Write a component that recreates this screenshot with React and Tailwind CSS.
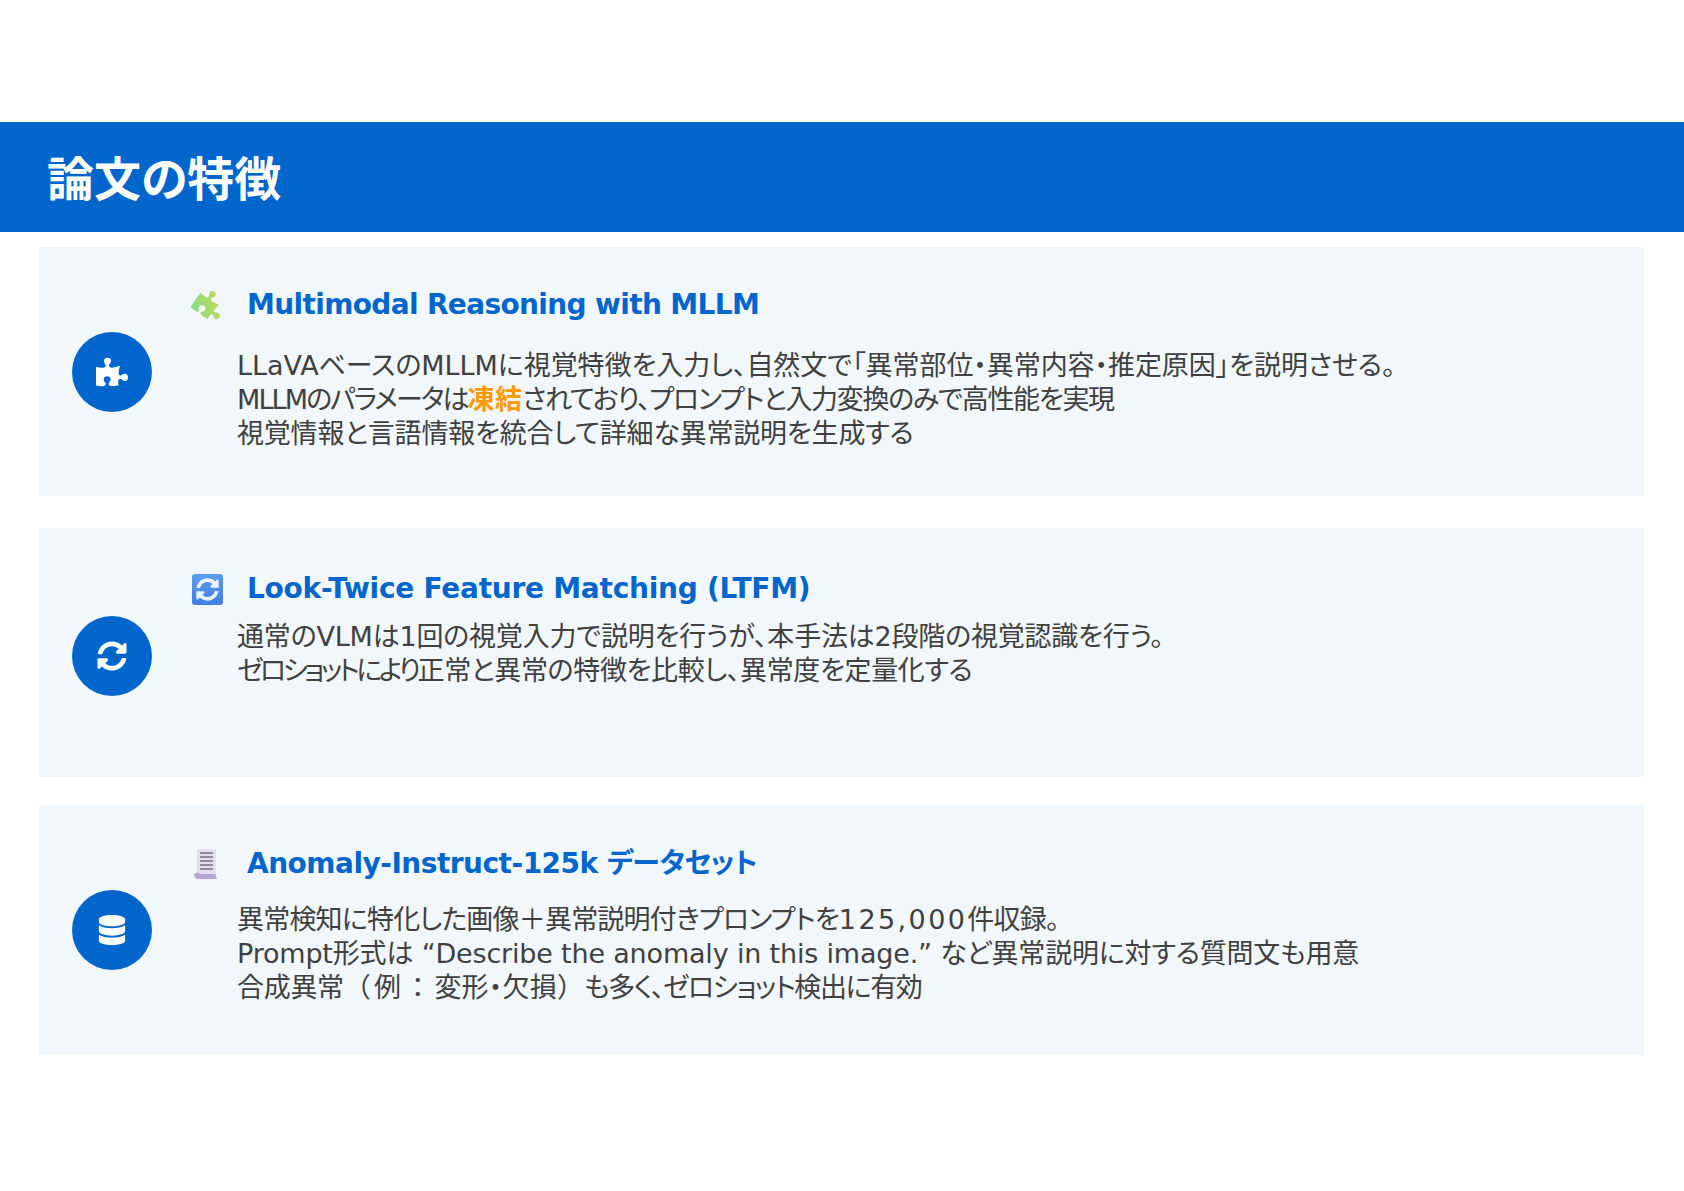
import React from "react";
import { FaPuzzlePiece, FaSyncAlt, FaDatabase } from "react-icons/fa";

const latin = "font-['DejaVu_Sans','Noto_Sans_CJK_JP',sans-serif] [font-feature-settings:'palt']";

function PuzzleEmoji() {
  return (
    <div className="w-[34px] h-[34px] flex items-center justify-center pl-[5px]">
      <svg width="0" height="0" className="absolute">
        <defs>
          <linearGradient id="pz" x1="0" y1="1" x2="1" y2="0">
            <stop offset="0" stopColor="#7fe08a" />
            <stop offset="1" stopColor="#d8d84a" />
          </linearGradient>
        </defs>
      </svg>
      <FaPuzzlePiece size={30} className="shrink-0 rotate-[35deg]" style={{ fill: "url(#pz)" }} />
    </div>
  );
}

function SyncEmoji() {
  return (
    <div className="w-[31px] h-[31px] rounded-[3px] bg-gradient-to-b from-[#5c9cf0] to-[#3f7fe0] flex items-center justify-center">
      <FaSyncAlt size={23} color="#eef4fd" />
    </div>
  );
}

function ScrollEmoji() {
  return (
    <svg width="34" height="32" viewBox="0 0 34 32">
      <path d="M7 1h19v27H7z" fill="#e4def0" />
      <path d="M4 26c3-2 5-1 6 0h15l2 5H8c-2 0-4-2-4-5z" fill="#b5a6d6" />
      <path d="M10 5h13M10 9h13M10 13h13M10 17h13M10 21h13" stroke="#8d8a99" strokeWidth="2" />
    </svg>
  );
}

const cards = [
  {
    cls: "h-[249px] mt-[15px]",
    circleCls: "",
    titleCls: "pt-[41px]",
    bodyCls: "mt-[27px]",
    Icon: FaPuzzlePiece,
    iconSize: 32,
    Emoji: PuzzleEmoji,
    titleTrack: "tracking-[-0.65px]",
    title: "Multimodal Reasoning with MLLM",
    lines: [
      { t: "tracking-[-0.06px]", c: ["LLaVAベースのMLLMに視覚特徴を入力し、自然文で「異常部位・異常内容・推定原因」を説明させる。"] },
      {
        t: "tracking-[-1.3px]",
        c: [
          <span key="p" className="tracking-[-1.9px]">MLLMのパラメータは</span>,
          <span key="f" className="text-[#ff9900] font-bold tracking-[0.3px]">凍結</span>,
          "されており、プロンプトと入力変換のみで高性能を実現",
        ],
      },
      { t: "tracking-[-0.2px]", c: ["視覚情報と言語情報を統合して詳細な異常説明を生成する"] },
    ],
  },
  {
    cls: "h-[249px] mt-[32px]",
    circleCls: "mt-[6px]",
    titleCls: "pt-[44px]",
    bodyCls: "mt-[14px]",
    Icon: FaSyncAlt,
    iconSize: 30,
    Emoji: SyncEmoji,
    titleTrack: "tracking-[-0.25px]",
    title: "Look-Twice Feature Matching (LTFM)",
    lines: [
      { t: "tracking-[-0.2px]", c: ["通常のVLMは1回の視覚入力で説明を行うが、本手法は2段階の視覚認識を行う。"] },
      {
        t: "tracking-[-0.35px]",
        c: [<span key="z" className="tracking-[-3.4px]">ゼロショットにより</span>, "正常と異常の特徴を比較し、異常度を定量化する"],
      },
    ],
  },
  {
    cls: "h-[250px] mt-[28px]",
    circleCls: "",
    titleCls: "pt-[42px]",
    bodyCls: "mt-[22px]",
    Icon: FaDatabase,
    iconSize: 30,
    Emoji: ScrollEmoji,
    titleTrack: "tracking-[-0.5px]",
    title: "Anomaly-Instruct-125k データセット",
    lines: [
      {
        t: "tracking-[-0.8px]",
        c: ["異常検知に特化した画像＋異常説明付きプロンプトを", <span key="n" className="tracking-[2.4px]">125,000</span>, "件収録。"],
      },
      { t: "tracking-[-0.18px]", c: ["Prompt形式は “Describe the anomaly in this image.” など異常説明に対する質問文も用意"] },
      {
        t: "tracking-[-1.4px]",
        c: [
          <span key="c" className="tracking-[-0.3px]">合成異常</span>,
          <span key="a" className="[font-feature-settings:normal] tracking-[3.2px]">（例：</span>,
          <span key="d" className="tracking-[0.2px]">変形・欠損</span>,
          <span key="b" className="[font-feature-settings:normal] tracking-[0.2px]">）</span>,
          "も多く、ゼロショット検出に有効",
        ],
      },
    ],
  },
];

export default function App() {
  return (
    <div className={`w-[1684px] h-[1191px] bg-white pt-[122px] ${latin}`}>
      <header className="h-[110px] bg-[#0066cc] flex items-center pl-[47px] pt-[5px]">
        <h1 className="text-[47px] leading-none font-bold text-white">論文の特徴</h1>
      </header>
      <div className="pl-[39px] pr-[40px]">
        {cards.map((c) => (
          <section key={c.title} className={`bg-[#f2f7fc] flex items-center pl-[33px] ${c.cls}`}>
            <div className={`w-20 h-20 shrink-0 rounded-full bg-[#0066cc] flex items-center justify-center ${c.circleCls}`}>
              <c.Icon size={c.iconSize} color="#fff" />
            </div>
            <div className={`self-start ml-[38px] ${c.titleCls}`}>
              <div className="flex items-center h-[34px]">
                <div className="w-[34px] flex justify-center"><c.Emoji /></div>
                <h2 className={`ml-[23px] text-[28px] leading-[34px] font-bold text-[#0066cc] ${c.titleTrack}`}>{c.title}</h2>
              </div>
              <div className={`ml-[47px] text-[27px] leading-[34px] font-normal text-[#404040] ${c.bodyCls}`}>
                {c.lines.map((l, i) => (
                  <p key={i} className={`whitespace-nowrap ${l.t}`}>{l.c}</p>
                ))}
              </div>
            </div>
          </section>
        ))}
      </div>
    </div>
  );
}
